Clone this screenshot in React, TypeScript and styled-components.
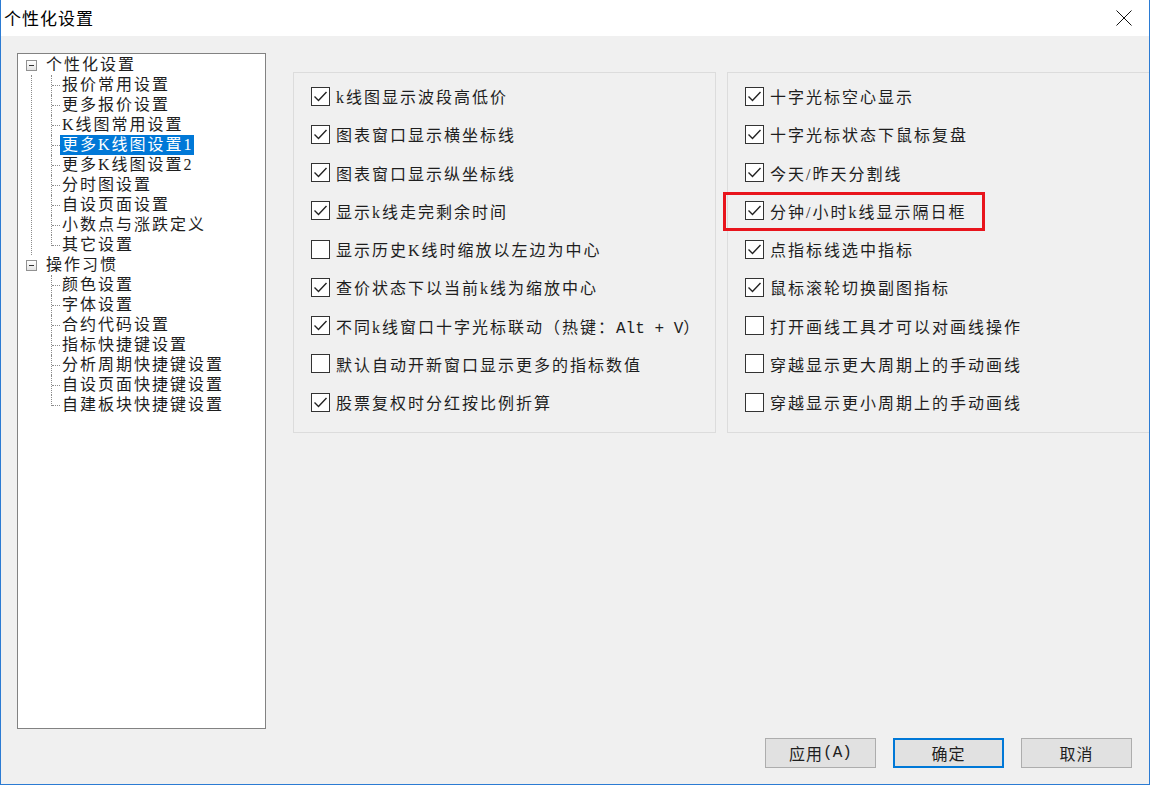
import React from "react";
import styled, { createGlobalStyle, css } from "styled-components";

const Global = createGlobalStyle`
  html, body { margin: 0; padding: 0; background: #f0f0f0; }
  #root { width: 1150px; height: 785px; }
  * { box-sizing: border-box; }
`;

const FONT = `"Liberation Serif", "Noto Sans CJK SC", serif`;

const Window = styled.div`
  width: 1150px;
  height: 785px;
  display: flex;
  flex-direction: column;
  border-left: 1px solid #2b7bd3;
  border-right: 1px solid #2b7bd3;
  border-bottom: 1px solid #2b7bd3;
  overflow: hidden;
  background: #f0f0f0;
  font-family: ${FONT};
  color: #1e1e1e;
`;

const TitleBar = styled.div`
  height: 36px;
  flex: none;
  background: #ffffff;
  display: flex;
  align-items: center;
  justify-content: space-between;
  padding: 0 16px 0 3px;
`;

const Title = styled.div`
  font-family: "Noto Sans CJK SC", sans-serif;
  font-size: 17px;
  letter-spacing: 1px;
  color: #000;
  line-height: 20px;
`;

const CloseButton = styled.div`
  width: 18px;
  height: 18px;
  display: flex;
  align-items: center;
  justify-content: center;
`;

const Body = styled.div`
  flex: 1;
  display: flex;
  flex-direction: column;
  padding: 17px 0 17px 16px;
`;

const Main = styled.div`
  height: 676px;
  display: flex;
`;

const TreeBox = styled.div`
  width: 249px;
  height: 676px;
  flex: none;
  background: #ffffff;
  border: 1px solid #828282;
  padding-top: 1px;
  font-size: 16px;
  letter-spacing: 2px;
`;

const RootRow = styled.div`
  height: 20px;
  display: flex;
  align-items: center;
  padding-left: 8px;
`;

const ExpandBox = styled.div`
  width: 11px;
  height: 11px;
  border: 1px solid #919191;
  background: linear-gradient(#ffffff, #e3e3e3);
  display: flex;
  align-items: center;
  justify-content: center;
  margin-right: 7px;
  &::after {
    content: "";
    width: 5px;
    height: 1px;
    background: #333;
  }
`;

const Children = styled.div<{ $line: boolean }>`
  margin-left: 13px;
  border-left: 1px dotted ${(p) => (p.$line ? "#8c8c8c" : "transparent")};
`;

const ChildRow = styled.div`
  height: 20px;
  display: flex;
  align-items: center;
`;

const Guide = styled.span<{ $last: boolean }>`
  position: relative;
  width: 28px;
  height: 20px;
  flex: none;
  &::before {
    content: "";
    position: absolute;
    left: 19px;
    top: 0;
    height: ${(p) => (p.$last ? "11px" : "20px")};
    border-left: 1px dotted #8c8c8c;
  }
  &::after {
    content: "";
    position: absolute;
    left: 20px;
    top: 10px;
    width: 8px;
    border-top: 1px dotted #8c8c8c;
  }
`;

const Label = styled.span<{ $selected?: boolean }>`
  line-height: 20px;
  height: 20px;
  padding: 0 0 0 2px;
  white-space: nowrap;
  ${(p) =>
    p.$selected &&
    css`
      background: #0078d7;
      color: #ffffff;
    `}
`;

const Panels = styled.div`
  margin-left: 27px;
  margin-top: 19px;
  display: grid;
  grid-template-columns: 423px 423px;
  gap: 11px;
  align-items: start;
`;

const Panel = styled.div`
  height: 361px;
  border: 1px solid #dcdcdc;
  padding: 4px 0 0 17px;
  font-size: 16px;
  letter-spacing: 2px;
`;

const CheckRow = styled.div`
  position: relative;
  height: 38.25px;
  display: flex;
  align-items: center;
  white-space: nowrap;
`;

const Box = styled.span`
  width: 19px;
  height: 19px;
  flex: none;
  border: 1px solid #333333;
  background: #ffffff;
  margin-right: 6px;
  display: flex;
  align-items: center;
  justify-content: center;
`;

const Mono = styled.span`
  font-family: "Liberation Mono", monospace;
  letter-spacing: 0;
  font-size: 16px;
`;

const Highlight = styled.div`
  position: absolute;
  left: -22px;
  top: 0;
  width: 262px;
  height: 39px;
  border: 3px solid #e8141c;
  pointer-events: none;
`;

const Footer = styled.div`
  margin-top: 9px;
  display: flex;
  justify-content: flex-end;
  gap: 17px;
  padding-right: 17px;
`;

const Button = styled.div<{ $default?: boolean }>`
  width: 111px;
  height: 30px;
  background: #e1e1e1;
  border: ${(p) => (p.$default ? "2px solid #0078d7" : "1px solid #adadad")};
  display: flex;
  align-items: center;
  justify-content: center;
  font-size: 16px;
  letter-spacing: 1px;
  color: #1e1e1e;
`;

const Check = () => (
  <svg width="15" height="13" viewBox="0 0 15 13">
    <polyline points="1.5,6.5 5.5,10.5 13.5,2" fill="none" stroke="#222" strokeWidth="1.4" />
  </svg>
);

type Item = { c: boolean; t: React.ReactNode; hl?: boolean };

const leftItems: Item[] = [
  { c: true, t: "k线图显示波段高低价" },
  { c: true, t: "图表窗口显示横坐标线" },
  { c: true, t: "图表窗口显示纵坐标线" },
  { c: true, t: "显示k线走完剩余时间" },
  { c: false, t: "显示历史K线时缩放以左边为中心" },
  { c: true, t: "查价状态下以当前k线为缩放中心" },
  {
    c: true,
    t: (
      <>
        不同k线窗口十字光标联动（热键：<Mono>Alt + V</Mono>）
      </>
    ),
  },
  { c: false, t: "默认自动开新窗口显示更多的指标数值" },
  { c: true, t: "股票复权时分红按比例折算" },
];

const rightItems: Item[] = [
  { c: true, t: "十字光标空心显示" },
  { c: true, t: "十字光标状态下鼠标复盘" },
  { c: true, t: "今天/昨天分割线" },
  { c: true, t: "分钟/小时k线显示隔日框", hl: true },
  { c: true, t: "点指标线选中指标" },
  { c: true, t: "鼠标滚轮切换副图指标" },
  { c: false, t: "打开画线工具才可以对画线操作" },
  { c: false, t: "穿越显示更大周期上的手动画线" },
  { c: false, t: "穿越显示更小周期上的手动画线" },
];

const tree = [
  {
    label: "个性化设置",
    children: [
      "报价常用设置",
      "更多报价设置",
      "K线图常用设置",
      "更多K线图设置1",
      "更多K线图设置2",
      "分时图设置",
      "自设页面设置",
      "小数点与涨跌定义",
      "其它设置",
    ],
  },
  {
    label: "操作习惯",
    children: [
      "颜色设置",
      "字体设置",
      "合约代码设置",
      "指标快捷键设置",
      "分析周期快捷键设置",
      "自设页面快捷键设置",
      "自建板块快捷键设置",
    ],
  },
];

const CheckList = ({ items }: { items: Item[] }) => (
  <Panel>
    {items.map((it, i) => (
      <CheckRow key={i}>
        {it.hl && <Highlight />}
        <Box>{it.c && <Check />}</Box>
        <span>{it.t}</span>
      </CheckRow>
    ))}
  </Panel>
);

export default function App() {
  return (
    <>
      <Global />
      <Window>
        <TitleBar>
          <Title>个性化设置</Title>
          <CloseButton>
            <svg width="16" height="16" viewBox="0 0 16 16">
              <path d="M0.5 0.5 L15.5 15.5 M15.5 0.5 L0.5 15.5" stroke="#111" strokeWidth="1" fill="none" />
            </svg>
          </CloseButton>
        </TitleBar>
        <Body>
          <Main>
            <TreeBox>
              {tree.map((node, ni) => (
                <div key={ni}>
                  <RootRow>
                    <ExpandBox />
                    <Label>{node.label}</Label>
                  </RootRow>
                  <Children $line={ni < tree.length - 1}>
                    {node.children.map((c, ci) => (
                      <ChildRow key={ci}>
                        <Guide $last={ci === node.children.length - 1} />
                        <Label $selected={c === "更多K线图设置1"}>{c}</Label>
                      </ChildRow>
                    ))}
                  </Children>
                </div>
              ))}
            </TreeBox>
            <Panels>
              <CheckList items={leftItems} />
              <CheckList items={rightItems} />
            </Panels>
          </Main>
          <Footer>
            <Button>
              应用<Mono>(A)</Mono>
            </Button>
            <Button $default>确定</Button>
            <Button>取消</Button>
          </Footer>
        </Body>
      </Window>
    </>
  );
}
